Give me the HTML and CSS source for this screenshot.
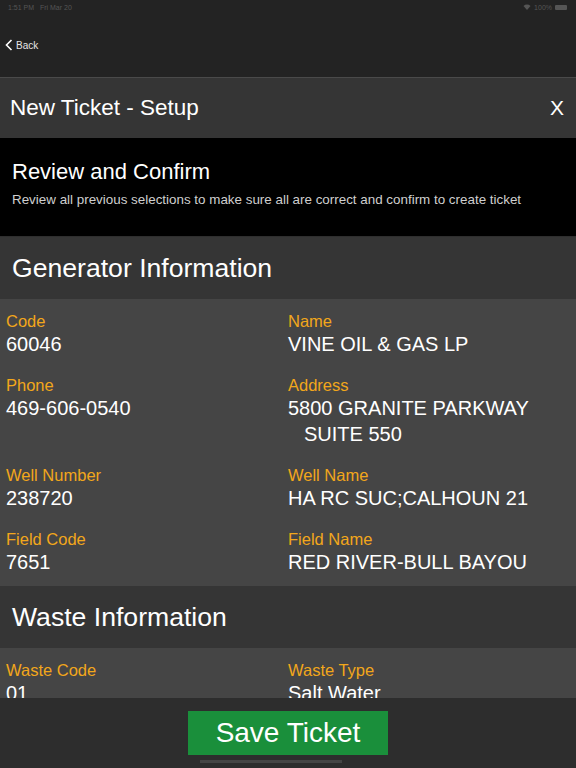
FILE: index.html
```html
<!DOCTYPE html>
<html lang="en">
<head>
    <meta charset="UTF-8">
    <meta name="viewport" content="width=device-width, initial-scale=1.0">
    <title>New Ticket - Setup</title>
    <link rel="stylesheet" href="styles.css">
</head>
<body>
    <div class="screen">
        <div class="nav-area">
            <div class="status-bar">
                <span>1:51 PM&nbsp;&nbsp;&nbsp;Fri Mar 20</span>
                <span class="status-right">
                    <svg width="8" height="6" viewBox="0 0 8 6"><path d="M0.5 2 A5 5 0 0 1 7.5 2 L4 6 Z" fill="#555"/></svg>
                    100%
                    <span class="battery"></span>
                </span>
            </div>
            <div class="back-row">
                <svg class="chevron" width="8" height="12" viewBox="0 0 8 12"><path d="M6.5 1 L1.5 6 L6.5 11" fill="none" stroke="#fff" stroke-width="1.6"/></svg>
                <span>Back</span>
            </div>
        </div>

        <div class="title-bar">
            <span>New Ticket - Setup</span>
            <span class="close">X</span>
        </div>

        <div class="scroll-area">
            <div class="review">
                <h2>Review and Confirm</h2>
                <p>Review all previous selections to make sure all are correct and confirm to create ticket</p>
            </div>

            <div class="section-head">Generator Information</div>
            <div class="fields">
                <div class="field">
                    <div class="label">Code</div>
                    <div class="value">60046</div>
                </div>
                <div class="field">
                    <div class="label">Name</div>
                    <div class="value">VINE OIL &amp; GAS LP</div>
                </div>
                <div class="field">
                    <div class="label">Phone</div>
                    <div class="value">469-606-0540</div>
                </div>
                <div class="field">
                    <div class="label">Address</div>
                    <div class="value">5800 GRANITE PARKWAY<span class="indent">SUITE 550</span></div>
                </div>
                <div class="field">
                    <div class="label">Well Number</div>
                    <div class="value">238720</div>
                </div>
                <div class="field">
                    <div class="label">Well Name</div>
                    <div class="value">HA RC SUC;CALHOUN 21</div>
                </div>
                <div class="field">
                    <div class="label">Field Code</div>
                    <div class="value">7651</div>
                </div>
                <div class="field">
                    <div class="label">Field Name</div>
                    <div class="value">RED RIVER-BULL BAYOU</div>
                </div>
            </div>

            <div class="section-head">Waste Information</div>
            <div class="fields">
                <div class="field">
                    <div class="label">Waste Code</div>
                    <div class="value">01</div>
                </div>
                <div class="field">
                    <div class="label">Waste Type</div>
                    <div class="value">Salt Water</div>
                </div>
            </div>
        </div>

        <div class="footer">
            <button class="save-btn">Save Ticket</button>
            <div class="home-indicator"></div>
        </div>
    </div>
</body>
</html>
```

FILE: styles.css
```css
body {
    margin: 0;
    font-family: "Liberation Sans", Arial, sans-serif;
    background: #222;
    color: #fff;
}

.screen {
    width: 576px;
    height: 768px;
    display: flex;
    flex-direction: column;
    overflow: hidden;
}

.nav-area {
    height: 77px;
    background: #232323;
    border-bottom: 1px solid #4a4a4a;
    flex-shrink: 0;
}

.status-bar {
    display: flex;
    justify-content: space-between;
    align-items: center;
    height: 14px;
    padding: 0 9px 0 8px;
    font-size: 7px;
    color: #555;
}

.status-right {
    display: flex;
    align-items: center;
    gap: 3px;
}

.battery {
    display: inline-block;
    width: 12px;
    height: 5px;
    background: #555;
    border-radius: 1px;
}

.back-row {
    display: flex;
    align-items: center;
    gap: 3px;
    padding: 25px 0 0 5px;
    font-size: 10px;
    color: #e6e6e6;
}

.title-bar {
    height: 60px;
    background: #353535;
    display: flex;
    justify-content: space-between;
    align-items: center;
    padding: 0 12px 0 10px;
    font-size: 22.5px;
    flex-shrink: 0;
}

.close {
    font-size: 21px;
}

.scroll-area {
    flex: 1;
    overflow: hidden;
}

.review {
    background: #000;
    height: 99px;
    padding: 22px 12px 0;
    box-sizing: border-box;
    border-bottom: 1px solid #2e2e2e;
}

.review h2 {
    margin: 0;
    font-size: 22px;
    font-weight: 400;
    line-height: 24px;
}

.review p {
    margin: 8px 0 0;
    font-size: 13.4px;
    color: #cfcfcf;
}

.section-head {
    height: 62px;
    background: #353535;
    display: flex;
    align-items: center;
    padding-left: 12px;
    font-size: 26.6px;
}

.fields {
    background: #454545;
    display: grid;
    grid-template-columns: 1fr 1fr;
    row-gap: 18px;
    padding: 12px 6px 11px;
}

.label {
    font-size: 16.5px;
    line-height: 20px;
    color: #f2a71b;
}

.value {
    font-size: 20px;
    line-height: 26px;
}

.indent {
    display: block;
    padding-left: 16px;
}

.footer {
    height: 70px;
    background: #2d2d2d;
    flex-shrink: 0;
    display: flex;
    flex-direction: column;
    align-items: center;
    padding-top: 13px;
    box-sizing: border-box;
}

.save-btn {
    width: 200px;
    height: 44px;
    border: none;
    background: #1a8f3b;
    color: #fff;
    font-family: inherit;
    font-size: 28px;
    padding: 0;
}

.home-indicator {
    width: 142px;
    height: 3px;
    background: #454545;
    margin-top: 5px;
    margin-right: 35px;
}
```
